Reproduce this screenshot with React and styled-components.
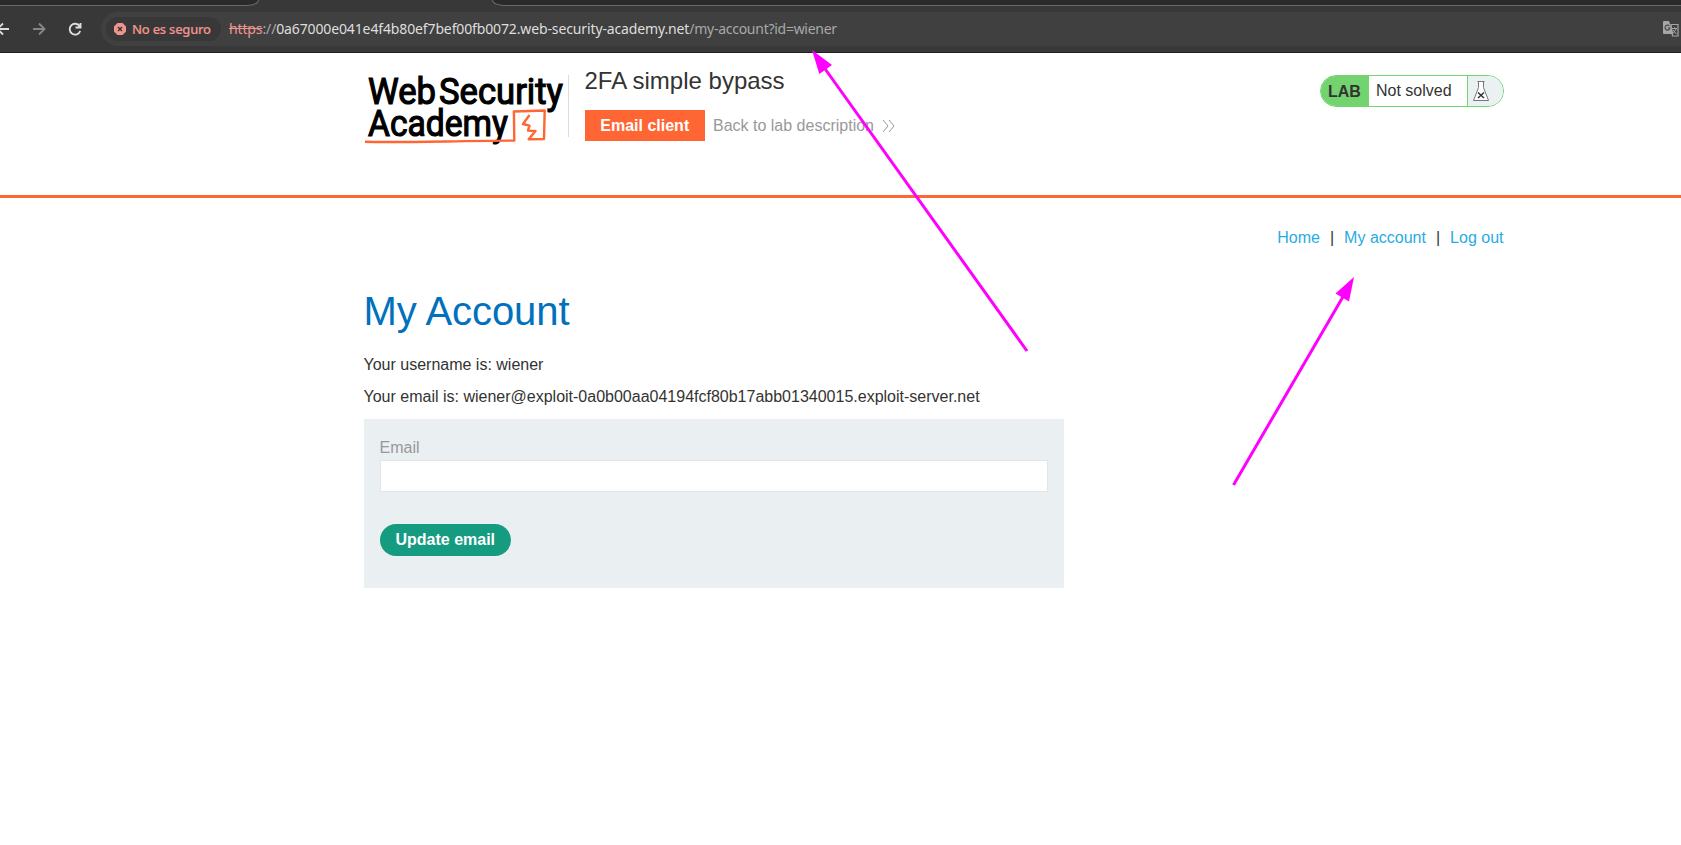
import React from 'react';
import styled, { createGlobalStyle } from 'styled-components';

const Global = createGlobalStyle`
  *, *::before, *::after { box-sizing: border-box; }
  body { margin: 0; background: #fff; color: #333332; font: 16px/18px "Liberation Sans", Arial, sans-serif; overflow: hidden; }
`;
const Page = styled.div`position: relative; width: 1681px; height: 845px; overflow: hidden; display: flex; flex-direction: column;`;

const Browser = styled.div`
  height: 53px; flex: none; background: #383838; border-bottom: 1px solid #241f24;
  display: flex; flex-direction: column; overflow: hidden;
  font-family: "Noto Sans", sans-serif;
`;
const TabStrip = styled.div`display: flex; justify-content: space-between; height: 6px; flex: none;`;
const Tab = styled.div`
  background: #2a2a2a; border: 1px solid #6a6a6a; border-top: 0;
  width: ${p => p.$width}px;
  border-radius: ${p => (p.$right ? '0 0 0 12px / 0 0 0 6px' : '0 0 12px 0 / 0 0 6px 0')};
  ${p => (p.$right ? 'border-right: 0;' : 'border-left: 0;')}
`;
const Toolbar = styled.div`display: flex; align-items: center; height: 34px; margin-top: 6px;`;
const NavIcons = styled.svg`width: 101px; height: 34px; flex: none;`;
const Omnibox = styled.div`
  flex: 1; height: 34px; background: #404040; border-radius: 17px 0 0 17px;
  display: flex; align-items: center; padding-left: 5px;
`;
const Chip = styled.div`
  width: 115px; height: 24px; border-radius: 12px; background: #383838; color: #f0958d;
  display: flex; align-items: center; gap: 6px; padding-left: 8px; white-space: nowrap;
  font-size: 13px; font-weight: 500; letter-spacing: -0.25px; -webkit-text-stroke: 0.15px #f0958d;
`;
const Url = styled.div`
  margin-left: 8px; flex: 1; font-size: 14px; line-height: 20px; color: #dedede; white-space: nowrap; letter-spacing: -0.13px;
`;
const Scheme = styled.span`color: #f0958d; text-decoration: line-through;`;
const Dim = styled.span`color: #a9a9a9;`;
const Path = styled(Dim)`letter-spacing: -0.27px;`;
const TranslateIcon = styled.svg`width: 18px; height: 18px; flex: none;`;

const Header = styled.header`height: 145px; flex: none; border-bottom: 3px solid #ff6633;`;
const Container = styled.div`width: 1140px; margin-left: 363.5px; display: flex; ${p => p.$column && 'flex-direction: column;'}`;
const Logo = styled.svg`width: 204px; height: 80px; margin-top: 18px; flex: none; overflow: visible;`;
const TitleBox = styled.div`border-left: 1px solid #dcdcdc; height: 62px; margin-top: 22px; padding-left: 16px; flex: 1;`;
const Title = styled.h2`margin: -8px 0 0; font-size: 24px; line-height: 28px; font-weight: 400;`;
const Actions = styled.div`display: flex; align-items: center; margin-top: 15px; gap: 8px;`;
const EmailClient = styled.a`
  background: #ff6633; color: #fff; font-weight: 700; width: 120.5px; height: 31px; line-height: 31px; text-align: center;
`;
const BackLink = styled.a`color: #999; display: flex; align-items: center; gap: 8px;`;
const LabStatus = styled.div`
  width: 184px; height: 32px; margin-top: 22px; border: 1px solid #72d572; border-radius: 16px;
  display: flex; overflow: hidden; line-height: 30px; background: #fff;
`;
const LabTag = styled.div`width: 48px; background: #72d36f; font-weight: 700; padding-left: 7.5px; line-height: 32px;`;
const LabState = styled.div`flex: 1; padding-left: 7.5px; line-height: 29px;`;
const LabFlask = styled.div`width: 36px; background: #ebf0f3; border-left: 1px solid #72d572; padding: 4px 0 0 4.5px; line-height: 0;`;

const Nav = styled.nav`display: flex; justify-content: flex-end; margin-top: 31px;`;
const Link = styled.a`color: #29abe2;`;
const Sep = styled.span`width: 24.2px; text-align: center;`;
const H1 = styled.h1`margin: 40px 0 0; font-size: 40px; line-height: 48px; font-weight: 400; color: #0071bc; letter-spacing: -0.08px;`;
const Info = styled.p`margin: ${p => p.$top}px 0 0; line-height: 18px;`;
const Form = styled.form`width: 700px; height: 169px; margin-top: 13px; padding: 19px 16px 0; background: #eaeff2;`;
const Label = styled.label`display: block; color: #999; line-height: 20px;`;
const Input = styled.input`display: block; width: 668px; height: 32px; margin-top: 2px; border: 1px solid #e3e5e6; background: #fff; outline: 0;`;
const Button = styled.button`
  display: block; margin-top: 32px; width: 131px; height: 32px; border: 0; padding: 0 0 0 0.5px; border-radius: 16px;
  background: #159b80; color: #fff; font: 700 16px/32px "Liberation Sans", Arial, sans-serif;
`;
const Overlay = styled.svg`position: absolute; left: 0; top: 0; pointer-events: none;`;

function BrowserBar() {
  return (
    <Browser>
      <TabStrip><Tab $width={259} /><Tab $width={1189} $right /></TabStrip>
      <Toolbar>
        <NavIcons viewBox="0 0 101 34" fill="none" strokeWidth="1.9">
          <path d="M9 17H-2M3 11.5L-2.5 17L3 22.5" stroke="#dedede" />
          <path d="M33 17H44M39 11.5L44.5 17L39 22.5" stroke="#868686" />
          <path d="M79.6 14.2A5.4 5.4 0 1 0 80.2 19M80.5 11V15.5H75.5" stroke="#dedede" />
        </NavIcons>
        <Omnibox>
          <Chip>
            <svg width="12" height="12" viewBox="0 0 12 12">
              <path d="M3.6 0h4.8L12 3.6v4.8L8.4 12H3.6L0 8.4V3.6z" fill="#f0958d" stroke="#f0958d" strokeLinejoin="round" strokeWidth=".3" />
              <path d="M4 4L8 8M8 4L4 8" stroke="#383838" strokeWidth="1.5" />
            </svg>
            No es seguro
          </Chip>
          <Url><Scheme>https</Scheme><Dim>://</Dim>0a67000e041e4f4b80ef7bef00fb0072.web-security-academy.net<Path>/my-account?id=wiener</Path></Url>
          <TranslateIcon viewBox="0 0 18 18">
            <path d="M8 4.5H15V16H9.5Z" fill="#404040" stroke="#a6a6a6" strokeWidth="1.2" />
            <path d="M1 1H6L10.5 14H1Q0 14 0 13V2Q0 1 1 1Z" fill="#a6a6a6" />
            <path d="M6.3 5.8A2.5 2.5 0 1 0 7 8H4.7" fill="none" stroke="#404040" strokeWidth="1.1" />
            <path d="M9 8.5H14M11.5 7.3V8.5M10 10L13.5 14M13.2 8.8L10.5 13" fill="none" stroke="#a6a6a6" />
          </TranslateIcon>
        </Omnibox>
      </Toolbar>
    </Browser>
  );
}

function AcademyLogo() {
  return (
    <Logo viewBox="363.5 71 204 80">
      <g fill="#000" stroke="#000" strokeWidth="1.2" fontFamily="Roboto, sans-serif" fontSize="37" fontWeight="400">
        <text x="367.5" y="103.8" textLength="68" lengthAdjust="spacingAndGlyphs">Web</text>
        <text x="438.5" y="103.8" textLength="124" lengthAdjust="spacingAndGlyphs">Security</text>
        <text x="367.5" y="136.3" textLength="140" lengthAdjust="spacingAndGlyphs">Academy</text>
      </g>
      <g fill="none" stroke="#ff6633" strokeWidth="2.4" strokeLinejoin="round">
        <path d="M364.5 141.8C400 143 460 140.6 513.8 140.6L513.4 111.5L544.2 110.5L543.5 139L528.2 139.3L535 131L527.5 130.6L529 125.7L522.5 124L529 115" />
      </g>
    </Logo>
  );
}

function Arrows() {
  return (
    <Overlay width="1681" height="845" viewBox="0 0 1681 845" fill="#f0f">
      <path d="M1027 351L823 66M1233.5 485L1344 295" stroke="#f0f" strokeWidth="3" />
      <path d="M812 50L832 65L819.3 74Z" />
      <path d="M1354 277L1335.5 293.5L1349 301.5Z" />
    </Overlay>
  );
}

export default function App() {
  return (
    <Page>
      <Global />
      <BrowserBar />
      <Header>
        <Container>
          <AcademyLogo />
          <TitleBox>
            <Title>2FA simple bypass</Title>
            <Actions>
              <EmailClient>Email client</EmailClient>
              <BackLink>
                Back to lab description
                <svg width="13" height="14" viewBox="0 0 13 14" fill="none" stroke="#999">
                  <path d="M1 1L6 7L1 13M7 1L12 7L7 13" />
                </svg>
              </BackLink>
            </Actions>
          </TitleBox>
          <LabStatus>
            <LabTag>LAB</LabTag>
            <LabState>Not solved</LabState>
            <LabFlask>
              <svg width="18" height="22" viewBox="0 0 18 22" fill="#fff" stroke="#777">
                <path d="M6.5 1.5V7.5L1.5 20.5H16.5L11.5 7.5V1.5" />
                <path d="M5.5 1.5H12.5" />
                <path d="M6 12.5L12 18M12 12.5L6 18" stroke="#333" strokeWidth="1.5" />
              </svg>
            </LabFlask>
          </LabStatus>
        </Container>
      </Header>
      <Container $column>
        <Nav><Link>Home</Link><Sep>|</Sep><Link>My account</Link><Sep>|</Sep><Link>Log out</Link></Nav>
        <H1>My Account</H1>
        <Info $top={21}>Your username is: wiener</Info>
        <Info $top={14}>Your email is: wiener@exploit-0a0b00aa04194fcf80b17abb01340015.exploit-server.net</Info>
        <Form>
          <Label>Email</Label>
          <Input />
          <Button type="button">Update email</Button>
        </Form>
      </Container>
      <Arrows />
    </Page>
  );
}
